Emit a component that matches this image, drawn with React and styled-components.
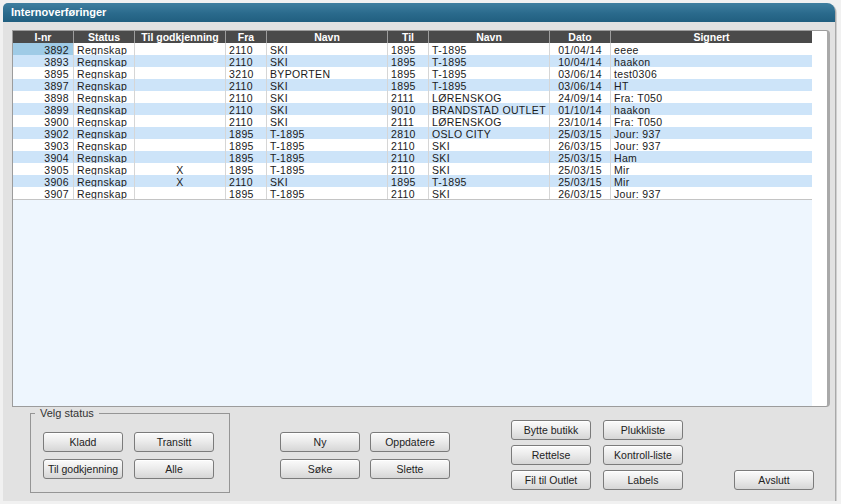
import React from 'react';
import styled, { createGlobalStyle } from 'styled-components';

const GlobalStyle = createGlobalStyle`
  body {
    margin: 0;
    background: #f1f1f1;
    font-family: 'Liberation Sans', Arial, sans-serif;
  }
`

const Window = styled.div`
  margin: 3px 0 0 3px;
  width: 832px;
  height: 498px;
  display: flex;
  flex-direction: column;
  background: #e2e2e2;
  border-radius: 5px 8px 0 0;
  box-shadow: 1px 1px 0 #a9a9a9, 2px 2px 0 #cfcfcf;
`

const TitleBar = styled.div`
  height: 19px;
  line-height: 18px;
  padding-left: 8px;
  border-radius: 5px 8px 0 0;
  background: linear-gradient(#3f7fa0, #2a6a8c 55%, #215f80);
  color: #fff;
  font-size: 11px;
  font-weight: bold;
`

const Body = styled.div`
  flex: 1;
  padding: 8px 0 0 9px;
  display: flex;
  flex-direction: column;
`

const GridPanel = styled.div`
  width: 814px;
  height: 375px;
  display: flex;
  border: 1px solid #9c9c9c;
  border-right: 3px solid #a9a9a9;
  border-radius: 0 4px 4px 0;
  background: #fff;
  overflow: hidden;
`

const GridArea = styled.div`
  width: 799px;
  background: #eef6fe;
  font-size: 10.5px;
`

const ScrollStrip = styled.div`
  flex: 1;
  background: #fff;
`

const cols = '61px 61px 91px 41px 121px 41px 121px 61px 201px'

const HeaderRow = styled.div`
  display: grid;
  grid-template-columns: ${cols};
  height: 12px;
  background: #4a4a4a;
`

const HeaderCell = styled.div`
  color: #fff;
  font-weight: bold;
  text-align: center;
  line-height: 12px;
  border-right: 1px solid #9d9d9d;
  &:last-child { border-right: none; }
`

const Rows = styled.div`
  border-bottom: 1px solid #c4c4c4;
`

const Row = styled.div`
  display: grid;
  grid-template-columns: ${cols};
  height: 12px;
  background: ${p => (p.$alt ? '#cde4f9' : '#fff')};
`

const Cell = styled.div`
  height: 12px;
  line-height: 15px;
  overflow: hidden;
  white-space: nowrap;
  color: #1a1a1a;
  letter-spacing: 0.35px;
  text-align: ${p => p.$align || 'left'};
  padding: 0 ${p => (p.$align === 'right' ? '4px' : '0')} 0 ${p => (p.$align === 'left' || !p.$align ? '3px' : '0')};
  border-right: 1px solid #d6d6d6;
  background: ${p => (p.$sel ? '#9fcbe6' : 'transparent')};
  &:last-child { border-right: none; }
`

const Footer = styled.div`
  flex: 1;
  display: flex;
  align-items: flex-start;
  padding-left: 18px;
`

const StatusBox = styled.fieldset`
  margin: 0;
  width: 200px;
  box-sizing: border-box;
  padding: 13px 15px 13px 12px;
  border: 1px solid #959595;
`

const Legend = styled.legend`
  margin-left: -8px;
  padding: 0 5px;
  font-size: 11px;
  line-height: 12px;
  color: #333;
`

const ButtonGrid = styled.div`
  display: grid;
  grid-template-columns: repeat(${p => p.$cols}, 80px);
  column-gap: ${p => p.$colGap}px;
  row-gap: ${p => p.$rowGap}px;
  margin-top: ${p => p.$top || 0}px;
  margin-left: ${p => p.$left || 0}px;
`

const Button = styled.button`
  width: 80px;
  height: 20px;
  padding: 0;
  border: 1px solid #7b7b7b;
  border-radius: 3px;
  background: linear-gradient(#fbfbfb, #ececec 45%, #d6d6d6);
  font-family: 'Liberation Sans', Arial, sans-serif;
  font-size: 10.5px;
  color: #222;
  box-shadow: inset 0 1px 0 #fff;
`

const header = ['I-nr', 'Status', 'Til godkjenning', 'Fra', 'Navn', 'Til', 'Navn', 'Dato', 'Signert']
const align = ['right', 'left', 'center', 'left', 'left', 'left', 'left', 'center', 'left']

const rows = [
  ['3892', '', '2110', 'SKI', '1895', 'T-1895', '01/04/14', 'eeee'],
  ['3893', '', '2110', 'SKI', '1895', 'T-1895', '10/04/14', 'haakon'],
  ['3895', '', '3210', 'BYPORTEN', '1895', 'T-1895', '03/06/14', 'test0306'],
  ['3897', '', '2110', 'SKI', '1895', 'T-1895', '03/06/14', 'HT'],
  ['3898', '', '2110', 'SKI', '2111', 'LØRENSKOG', '24/09/14', 'Fra: T050'],
  ['3899', '', '2110', 'SKI', '9010', 'BRANDSTAD OUTLET', '01/10/14', 'haakon'],
  ['3900', '', '2110', 'SKI', '2111', 'LØRENSKOG', '23/10/14', 'Fra: T050'],
  ['3902', '', '1895', 'T-1895', '2810', 'OSLO CITY', '25/03/15', 'Jour: 937'],
  ['3903', '', '1895', 'T-1895', '2110', 'SKI', '26/03/15', 'Jour: 937'],
  ['3904', '', '1895', 'T-1895', '2110', 'SKI', '25/03/15', 'Ham'],
  ['3905', 'X', '1895', 'T-1895', '2110', 'SKI', '25/03/15', 'Mir'],
  ['3906', 'X', '2110', 'SKI', '1895', 'T-1895', '25/03/15', 'Mir'],
  ['3907', '', '1895', 'T-1895', '2110', 'SKI', '26/03/15', 'Jour: 937'],
]

export default function App() {
  return (
    <Window>
      <GlobalStyle />
      <TitleBar>Internoverføringer</TitleBar>
      <Body>
        <GridPanel>
          <GridArea>
            <HeaderRow>
              {header.map((h, i) => <HeaderCell key={i}>{h}</HeaderCell>)}
            </HeaderRow>
            <Rows>
              {rows.map((r, i) => {
                const cells = [r[0], 'Regnskap', ...r.slice(1)]
                return (
                  <Row key={r[0]} $alt={i % 2 === 1}>
                    {cells.map((c, j) => (
                      <Cell key={j} $align={align[j]} $sel={i === 0 && j === 0}>{c}</Cell>
                    ))}
                  </Row>
                )
              })}
            </Rows>
          </GridArea>
          <ScrollStrip />
        </GridPanel>

        <Footer>
          <StatusBox>
            <Legend>Velg status</Legend>
            <ButtonGrid $cols={2} $colGap={11} $rowGap={7}>
              <Button>Kladd</Button>
              <Button>Transitt</Button>
              <Button>Til godkjenning</Button>
              <Button>Alle</Button>
            </ButtonGrid>
          </StatusBox>

          <ButtonGrid $cols={2} $colGap={10} $rowGap={7} $top={25} $left={50}>
            <Button>Ny</Button>
            <Button>Oppdatere</Button>
            <Button>Søke</Button>
            <Button>Slette</Button>
          </ButtonGrid>

          <ButtonGrid $cols={2} $colGap={12} $rowGap={5} $top={13} $left={61}>
            <Button>Bytte butikk</Button>
            <Button>Plukkliste</Button>
            <Button>Rettelse</Button>
            <Button>Kontroll-liste</Button>
            <Button>Fil til Outlet</Button>
            <Button>Labels</Button>
          </ButtonGrid>

          <ButtonGrid $cols={1} $colGap={0} $rowGap={0} $top={63} $left={51}>
            <Button>Avslutt</Button>
          </ButtonGrid>
        </Footer>
      </Body>
    </Window>
  )
}
